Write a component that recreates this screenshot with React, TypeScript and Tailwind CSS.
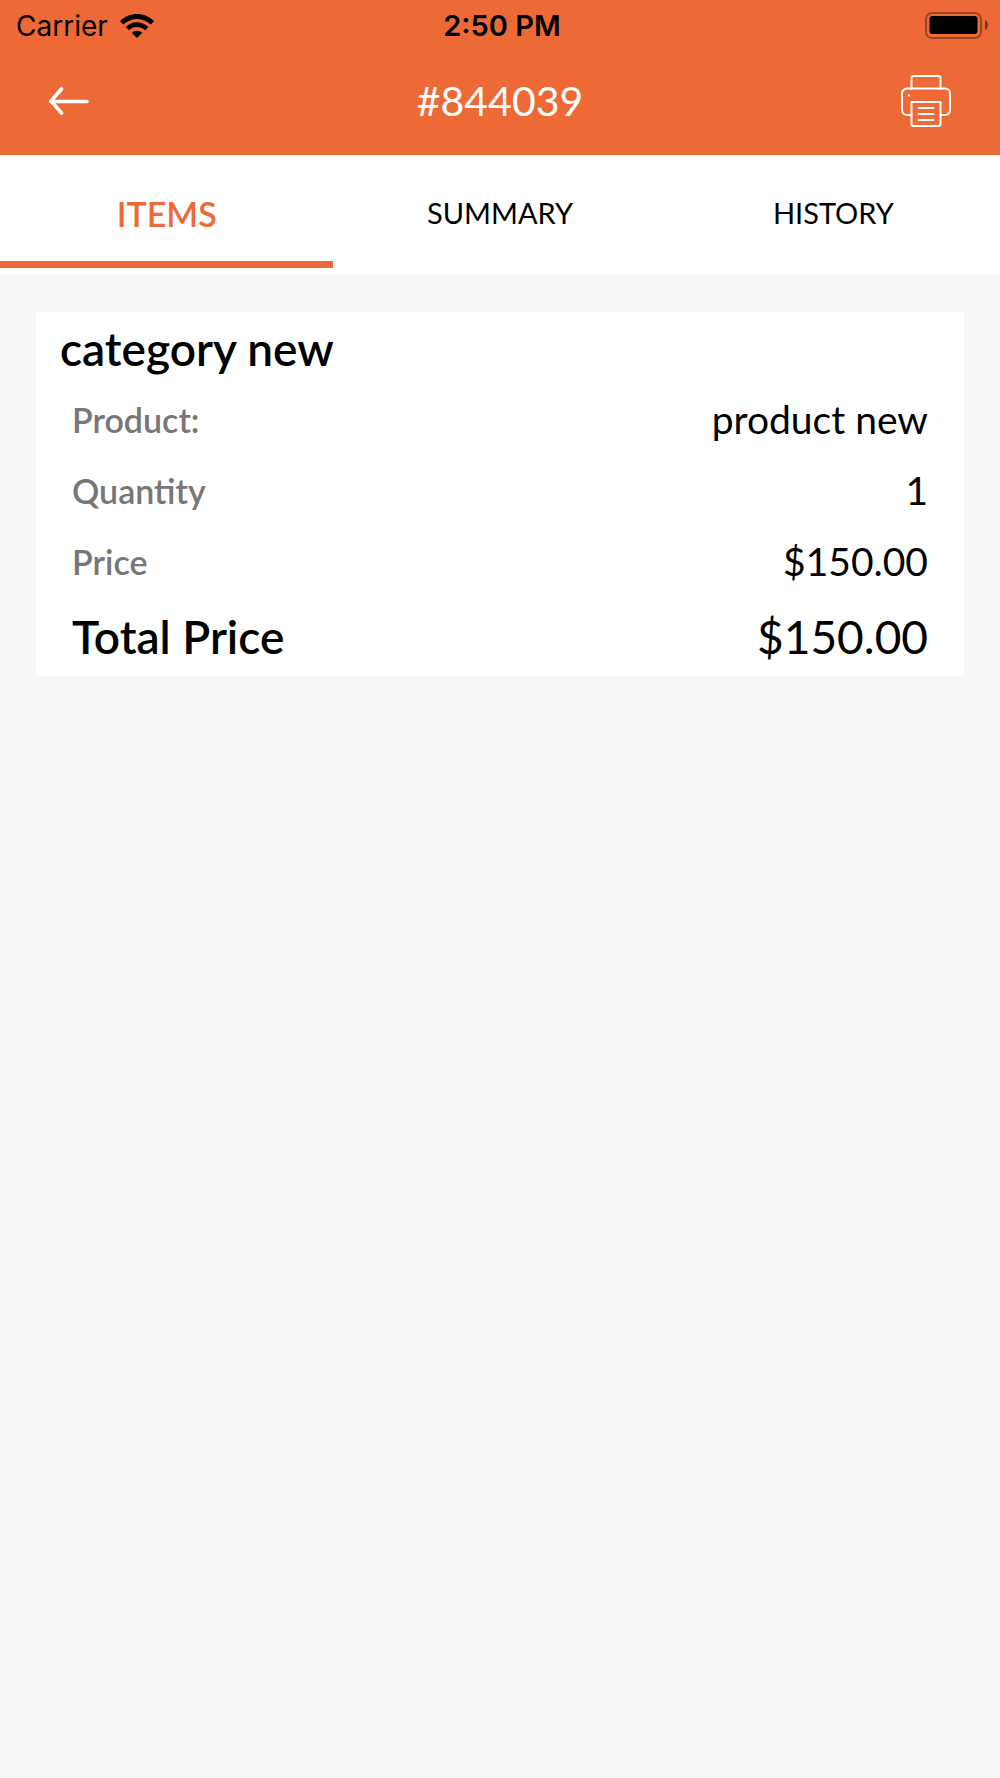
import { useState } from "react";

const tabs = ["ITEMS", "SUMMARY", "HISTORY"];

const rows = [
  { label: "Product:", value: "product new" },
  { label: "Quantity", value: "1" },
  { label: "Price", value: "$150.00" },
];

function WifiIcon() {
  return (
    <svg width="34" height="24" viewBox="0 0 34 24" aria-hidden="true">
      <path d="M0 7.200C9.500-2.400 24.500-2.400 34 7.200L30.700 10.500C23 3 11 3 3.300 10.500z" />
      <path d="M5.600 13C12 6.700 22 6.700 28.400 13L25.100 16.300C20.500 12 13.500 12 8.900 16.300z" />
      <path d="M17 24l-5.300-5.200c3-2.800 7.600-2.800 10.600 0z" />
    </svg>
  );
}

function BatteryIcon() {
  return (
    <svg width="63" height="28" viewBox="0 0 63 28" fill="none" aria-hidden="true">
      <rect x="1" y="1" width="55" height="25" rx="6" stroke="#9b4524" strokeWidth="2" />
      <rect x="4.5" y="4" width="48" height="18" rx="3" fill="#000" />
      <path d="M60 8c4 1.400 4 8.600 0 10z" fill="#7d371d" />
    </svg>
  );
}

function BackIcon() {
  return (
    <svg width="42" height="28" viewBox="0 0 42 28" fill="none" stroke="#fff" strokeWidth="3.600" strokeLinecap="round" strokeLinejoin="round" aria-hidden="true">
      <path d="M39 14.500H3M13.500 2L3 14l10.500 12" />
    </svg>
  );
}

function PrinterIcon() {
  return (
    <svg width="50" height="52" viewBox="0 0 50 52" fill="none" stroke="#fff" strokeWidth="2" strokeLinecap="round" strokeLinejoin="round" aria-hidden="true">
      <path d="M10.500 14V3a2 2 0 0 1 2-2h25a2 2 0 0 1 2 2v11" />
      <path d="M10.500 40H6a5 5 0 0 1-5-5V18.500a5 5 0 0 1 5-5h38a5 5 0 0 1 5 5V35a5 5 0 0 1-5 5h-4.500" />
      <path d="M10.500 27h29v22a2 2 0 0 1-2 2h-25a2 2 0 0 1-2-2z" />
      <path d="M17.500 33h15M17.500 39h15M17.500 45h15" />
      <circle cx="8" cy="20.500" r="1.200" fill="#fff" stroke="none" />
    </svg>
  );
}

export default function App() {
  const [active, setActive] = useState("ITEMS");

  return (
    <div className="min-h-screen bg-[#f6f6f6] font-['Lato',sans-serif] text-black">
      <header className="bg-[#ed6a36]">
        <div className="grid h-12 grid-cols-3 items-center pt-1 pr-3 pl-4 font-['Inter',sans-serif]">
          <div className="flex items-center gap-3">
            <span className="text-[28px] leading-8">Carrier</span>
            <WifiIcon />
          </div>
          <span className="text-center text-[29px] leading-8 font-semibold">2:50 PM</span>
          <div className="flex justify-end">
            <BatteryIcon />
          </div>
        </div>
        <div className="flex h-[107px] items-center justify-between px-12 pb-0.5">
          <button type="button" aria-label="Back" className="flex w-[52px]">
            <BackIcon />
          </button>
          <h1 className="text-[41px] leading-[52px] text-white">#844039</h1>
          <button type="button" aria-label="Print" className="flex w-[52px] justify-center">
            <PrinterIcon />
          </button>
        </div>
      </header>

      <nav className="grid grid-cols-3 bg-white pb-[7px]" role="tablist">
        {tabs.map((tab) => (
          <button
            key={tab}
            type="button"
            role="tab"
            aria-selected={tab === active}
            onClick={() => setActive(tab)}
            className={
              tab === active
                ? "h-[113px] border-b-[7px] border-[#ed6a36] pt-2.5 text-[34px] font-semibold text-[#ed6a36]"
                : "h-[113px] border-b-[7px] border-transparent pt-2.5 text-[29px]"
            }
          >
            {tab}
          </button>
        ))}
      </nav>

      <main className="px-9 pt-[37px] pb-9">
        <section className="bg-white px-6 pt-2">
          <h2 className="mb-1.5 text-[46px] leading-[58px] font-semibold">category new</h2>
          <dl className="px-3">
            {rows.map((row) => (
              <div key={row.label} className="flex h-[71px] items-center justify-between">
                <dt className="text-[34px] font-semibold text-[#777777]">{row.label}</dt>
                <dd className="text-[39px]">{row.value}</dd>
              </div>
            ))}
            <div className="flex h-[79px] items-center justify-between text-[46px]">
              <dt className="font-semibold">Total Price</dt>
              <dd>$150.00</dd>
            </div>
          </dl>
        </section>
      </main>
    </div>
  );
}
